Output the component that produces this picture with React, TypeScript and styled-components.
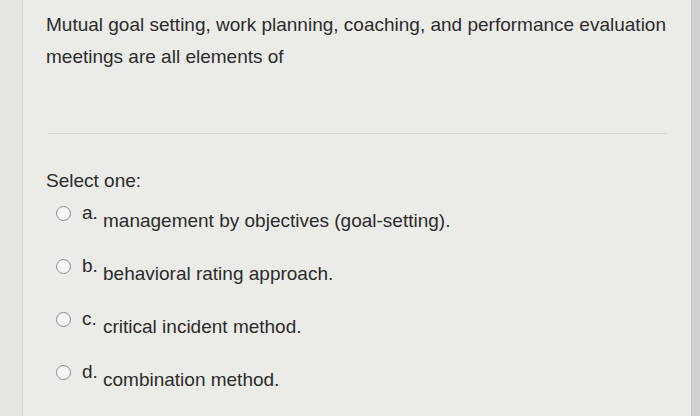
import React from "react";
import styled, { createGlobalStyle } from "styled-components";

const GlobalStyle = createGlobalStyle`
  html, body {
    margin: 0;
    padding: 0;
    background: #e8e8e5;
  }
  body {
    font-family: "Liberation Sans", Arial, sans-serif;
    color: #2b2b2b;
  }
`;

const Page = styled.div`
  display: flex;
  width: 700px;
  height: 416px;
  overflow: hidden;
`;

const Gutter = styled.div`
  width: 22px;
  flex-shrink: 0;
  background: #e6e6e3;
  border-right: 1px solid #d2d2ce;
`;

const Main = styled.main`
  flex: 1;
  padding: 9px 24px 0 23px;
  background: #ebebe8;
`;

const EdgeStrip = styled.div`
  width: 8px;
  flex-shrink: 0;
  background: #ced2d2;
  border-left: 1px solid #c3c7c7;
`;

const Question = styled.p`
  margin: 0;
  font-size: 19px;
  line-height: 32px;
  max-width: 630px;
`;

const Divider = styled.hr`
  margin: 60px 0 0 2px;
  border: 0;
  border-top: 1px solid #d6d6d2;
`;

const Prompt = styled.div`
  margin-top: 32px;
  font-size: 19px;
  line-height: 29px;
`;

const Options = styled.div`
  display: flex;
  flex-direction: column;
  margin-top: 7px;
  padding-left: 10px;
`;

const Option = styled.label`
  display: flex;
  align-items: flex-start;
  height: 53px;
  font-size: 19px;
  line-height: 22px;
`;

const Radio = styled.span`
  width: 15px;
  height: 15px;
  margin-top: 4px;
  margin-right: 11px;
  border-radius: 50%;
  border: 1.5px solid #8e8e8c;
  background: #f5f5f3;
  box-sizing: border-box;
  flex-shrink: 0;
`;

const Letter = styled.span`
  width: 21px;
  flex-shrink: 0;
`;

const Answer = styled.span`
  margin-top: 8px;
`;

const answers = [
  { letter: "a.", text: "management by objectives (goal-setting)." },
  { letter: "b.", text: "behavioral rating approach." },
  { letter: "c.", text: "critical incident method." },
  { letter: "d.", text: "combination method." },
];

export default function App() {
  return (
    <>
      <GlobalStyle />
      <Page>
        <Gutter />
        <Main>
          <Question>
            Mutual goal setting, work planning, coaching, and performance evaluation
            meetings are all elements of
          </Question>
          <Divider />
          <Prompt>Select one:</Prompt>
          <Options>
            {answers.map((a) => (
              <Option key={a.letter}>
                <Radio />
                <Letter>{a.letter}</Letter>
                <Answer>{a.text}</Answer>
              </Option>
            ))}
          </Options>
        </Main>
        <EdgeStrip />
      </Page>
    </>
  );
}
